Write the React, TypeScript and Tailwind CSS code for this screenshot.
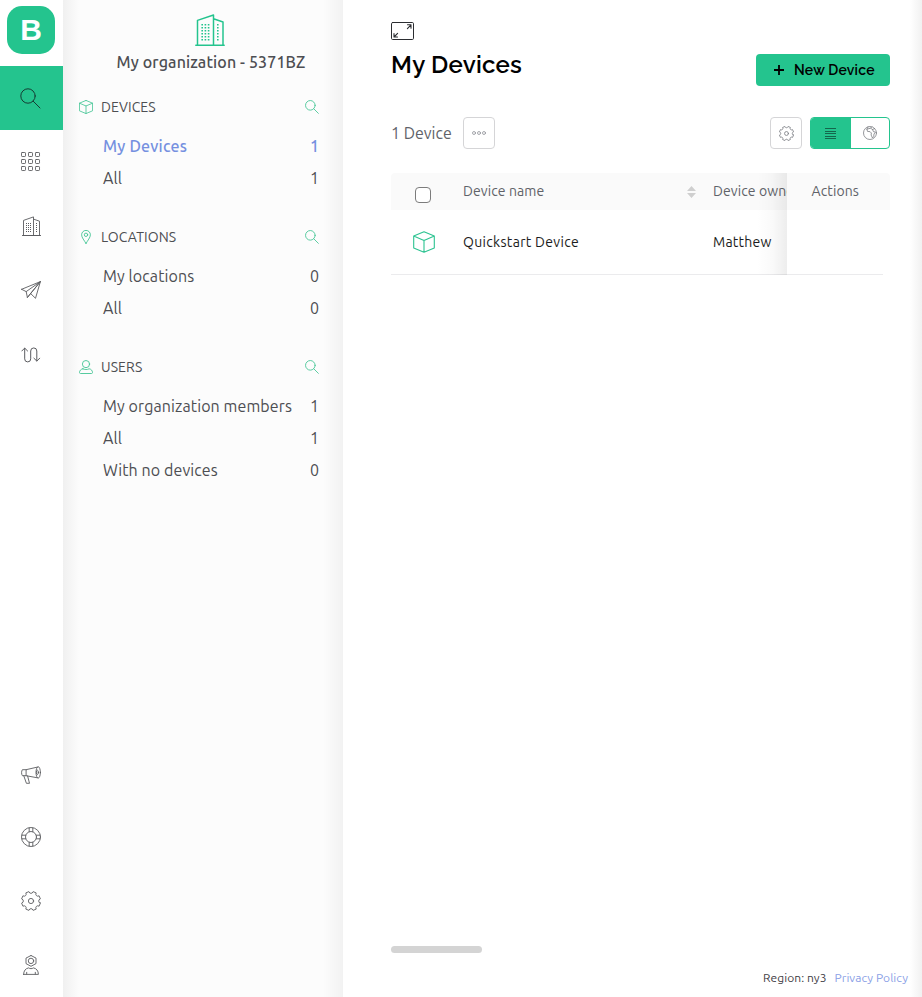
import React from "react";

type IconProps = { className?: string; children?: React.ReactNode };
type Box = IconProps & { box: string; sw?: number };

const Svg = ({ className = "", box, sw = 1, children }: Box) => (
  <svg className={`shrink-0 ${className}`} viewBox={box} fill="none" stroke="currentColor" strokeWidth={sw} strokeLinecap="round" strokeLinejoin="round">
    {children}
  </svg>
);

const SearchIcon = ({ className, sw = 1 }: IconProps & { sw?: number }) => (
  <Svg className={className} box="0 0 21 21" sw={sw}>
    <circle cx="8" cy="8" r="7.2" />
    <path d="M13.2 13.2 20 20" />
  </Svg>
);

const GridIcon = ({ className }: IconProps) => (
  <Svg className={className} box="0 0 20 20" sw={0.9}>
    {[0.5, 7.5, 14.5].map((y) => [0.5, 7.5, 14.5].map((x) => <rect key={`${x}-${y}`} x={x} y={y} width="4" height="4" rx="0.7" />))}
  </Svg>
);

const BuildingIcon = ({ className }: IconProps) => (
  <Svg className={className} box="0 0 30 33" sw={1.5}>
    <path d="M.8 31.2h28.4M2.5 31V6.4L18.5 1v30M18.5 4.7 28 8v23" />
    <path strokeWidth="1.6" strokeLinecap="butt" strokeDasharray="1.6 1.4" d="M7.2 10v18M10.4 10v18M13.6 10v18M22.8 10v18" />
  </Svg>
);

const SmallBuildingIcon = ({ className }: IconProps) => (
  <Svg className={className} box="0 0 19 21" sw={0.9}>
    <path strokeWidth="1.1" d="M.5 19.5h18" />
    <path d="M1.5 19.5V4.4L11.5.9v18.6M11.5 3.1l6 2.1v14.3" />
    <path strokeWidth="1" strokeLinecap="butt" strokeDasharray="1 1" d="M4.500 7v10M6.500 7v10M8.500 7v10M14.500 7v10" />
  </Svg>
);

const PlaneIcon = ({ className }: IconProps) => (
  <Svg className={className} box="0 0 20 18" sw={0.9}>
    <path d="M.6 8.3 19.4.6 14.5 17.3 9.6 12.5 19.4.6 5.2 10.6.6 8.3ZM5.2 10.6l1.2 5.9L19.4.6M6.4 16.5l3.2-4" />
  </Svg>
);

const RouteIcon = ({ className }: IconProps) => (
  <Svg className={className} box="0 0 20 16" sw={1}>
    <path d="M.8 4 3.7 1.1 6.6 4M3.7 1.3v10.6a3 3 0 0 0 6 0V4a3 3 0 0 1 6.1 0v9.9M12.9 11.2l2.9 2.9 2.9-2.9" />
  </Svg>
);

const MegaphoneIcon = ({ className }: IconProps) => (
  <Svg className={className} box="0 0 20 18" sw={0.9}>
    <path d="M5.1 3.7H1.4c-1.1 1.5-1.1 4.5 0 6h3.7l11.3 2.1M16.4 1.1 5.1 3.7v6M2.8 9.8l2.6 7.5h3.1L6.6 10" />
    <ellipse cx="17.2" cy="6.4" rx="2.2" ry="5.7" />
    <ellipse cx="16.4" cy="6.4" rx="1" ry="2.2" />
  </Svg>
);

const LifebuoyIcon = ({ className }: IconProps) => (
  <Svg className={className} box="0 0 20 20" sw={0.9}>
    <circle cx="10" cy="10" r="9.5" />
    <circle cx="10" cy="10" r="5.5" />
    <path d="M8.2.8v4M11.8.8v4M8.2 15.2v4M11.8 15.2v4M.8 8.2h4M.8 11.8h4M15.2 8.2h4M15.2 11.8h4" />
  </Svg>
);

const polar = (r: number, deg: number) => {
  const a = (deg * Math.PI) / 180;
  return `${(10 + r * Math.cos(a)).toFixed(2)} ${(10 + r * Math.sin(a)).toFixed(2)}`;
};
// Eight flat-topped teeth with a rounded notch between each pair.
const gearPath = Array.from({ length: 8 }, (_, i) => {
  const c = 22.5 + i * 45;
  return `${i ? "L" : "M"}${polar(9.6, c - 10)}L${polar(9.6, c + 10)}L${polar(8.1, c + 14)}Q${polar(7.3, c + 22.5)} ${polar(8.1, c + 31)}`;
}).join("") + "Z";

const GearIcon = ({ className, sw = 0.9 }: IconProps & { sw?: number }) => (
  <Svg className={className} box="0 0 20 20" sw={sw}>
    <circle cx="10" cy="10" r="2.6" />
    <path d={gearPath} />
  </Svg>
);

const ProfileIcon = ({ className }: IconProps) => (
  <Svg className={className} box="0 0 16 20" sw={0.9}>
    <path d="M8 .5 13 3.1v5.5L8 11.3 3 8.6V3.1L8 .5ZM.6 19.4c0-3.6 2-6 5-6.5 1.5 1 3.3 1 4.8 0 3 .5 5 2.9 5 6.5H.6ZM3.7 19v-1.7M12.3 19v-1.7" />
    <circle cx="8" cy="5.9" r="2.7" />
  </Svg>
);

const CubeIcon = ({ className, sw = 1.1 }: IconProps & { sw?: number }) => (
  <Svg className={className} box="0 0 22 22" sw={sw}>
    <path d="M11 .7 21.3 5v12L11 21.3.7 17V5L11 .7ZM.7 5 11 9.4 21.3 5M11 9.4v11.9" />
  </Svg>
);

const PinIcon = ({ className }: IconProps) => (
  <Svg className={className} box="0 0 10 14" sw={0.9}>
    <path d="M5 13.5C3.3 10.4.6 7.5.6 4.8a4.4 4.4 0 0 1 8.8 0c0 2.7-2.7 5.6-4.4 8.7Z" />
    <circle cx="5" cy="4.8" r="1.7" />
  </Svg>
);

const UserIcon = ({ className }: IconProps) => (
  <Svg className={className} box="0 0 14 14" sw={0.9}>
    <circle cx="7" cy="4.1" r="3.6" />
    <path d="M3.9 8.8C1.8 9 .5 10.8.5 12.5c0 .6.4 1 1 1h11c.6 0 1-.4 1-1 0-1.7-1.3-3.5-3.4-3.7-1.9 1-4.3 1-6.2 0Z" />
  </Svg>
);

const ExpandIcon = ({ className }: IconProps) => (
  <Svg className={className} box="0 0 23 18" sw={1}>
    <rect x=".5" y=".5" width="22" height="17" rx="1.2" />
    <path strokeWidth="1.1" d="M16.5 2.8H20v3.5M20 2.8l-3.6 3.8M6.500 15H3v-3.500M3 15l3.600-3.600" />
  </Svg>
);

const GlobeIcon = ({ className }: IconProps) => (
  <Svg className={className} box="0 0 14 14" sw={0.8}>
    <circle cx="7" cy="7" r="6.5" />
    <path d="M5 .9 3.9 3.2l.6 2.2 2.6.3 1.3 1.3-.3 2 1.4 3 1.2-1.5.3-2.5 1.5-1.9-2.1-.5-.8-2 2.1-1.2M3.9 3.2l3.6-1 2.2 1.4M7.5 2.2 8.8.9" />
  </Svg>
);

const topNav = [
  { icon: <GridIcon className="size-5" /> },
  { icon: <SmallBuildingIcon className="h-[21px] w-[19px]" /> },
  { icon: <PlaneIcon className="h-[18px] w-5" /> },
  { icon: <RouteIcon className="mt-px h-4 w-5" /> },
];
const bottomNav = [
  { icon: <MegaphoneIcon className="mt-[3px] h-[18px] w-5" /> },
  { icon: <LifebuoyIcon className="size-5" /> },
  { icon: <GearIcon className="size-5" /> },
  { icon: <ProfileIcon className="h-5 w-4" /> },
];

type Item = { label: string; count: number; active?: boolean };
const sections: { title: string; icon: React.ReactNode; items: Item[] }[] = [
  {
    title: "DEVICES",
    icon: <CubeIcon className="size-3.5" sw={1.3} />,
    items: [
      { label: "My Devices", count: 1, active: true },
      { label: "All", count: 1 },
    ],
  },
  {
    title: "LOCATIONS",
    icon: <PinIcon className="h-3.5 w-2.5" />,
    items: [
      { label: "My locations", count: 0 },
      { label: "All", count: 0 },
    ],
  },
  {
    title: "USERS",
    icon: <UserIcon className="size-3.5" />,
    items: [
      { label: "My organization members", count: 1 },
      { label: "All", count: 1 },
      { label: "With no devices", count: 0 },
    ],
  },
];

const Rail = () => (
  <nav className="flex w-[63px] shrink-0 flex-col bg-white text-[#5b5c60]">
    <div className="flex h-[66px] justify-center pt-1.5 pr-px">
      <div className="flex size-12 items-center justify-center rounded-[15px] bg-[#24c48e] font-['Liberation_Sans',sans-serif] text-[30px] leading-none font-bold text-white">
        B
      </div>
    </div>
    <a className="flex h-16 items-center justify-center bg-[#24c48e] pr-0.5 text-[#153c33]">
      <SearchIcon className="size-[21px]" />
    </a>
    {topNav.map((n, i) => (
      <a key={i} className="flex h-16 items-center justify-center pr-px">{n.icon}</a>
    ))}
    <div className="mt-auto">
      {bottomNav.map((n, i) => (
        <a key={i} className="flex h-16 items-center justify-center pr-px">{n.icon}</a>
      ))}
    </div>
  </nav>
);

const Sidebar = () => (
  <aside className="relative w-[280px] shrink-0 bg-[#fcfcfc] text-[#4d4e52]">
    <div className="pointer-events-none absolute inset-y-0 left-0 w-4 bg-gradient-to-r from-[#f0f0f0] to-transparent" />
    <div className="pointer-events-none absolute inset-y-0 right-0 w-5 bg-gradient-to-l from-[#f2f2f2] to-transparent" />
    <div className="relative flex h-[91px] flex-col items-center pt-3.5 pl-4">
      <BuildingIcon className="mr-0.5 h-[33px] w-[30px] text-[#24c48e]" />
      <h2 className="mt-[3px] text-[16px] leading-6 font-medium tracking-[0.12px] whitespace-nowrap">My organization - 5371BZ</h2>
    </div>
    <div className="relative flex flex-col gap-[26px] pr-6 pl-4">
      {sections.map((s) => (
        <section key={s.title}>
          <div className="mb-2 flex h-8 items-center">
            <span className="mr-2 flex w-3.5 justify-center text-[#43c594]">{s.icon}</span>
            <span className="text-[14px] tracking-[0.1px]">{s.title}</span>
            <SearchIcon className="ml-auto size-3.5 text-[#43c594]" sw={1.3} />
          </div>
          {s.items.map((it) => (
            <div key={it.label} className={`flex h-8 items-center justify-between pb-0.5 pl-6 text-[16px] ${it.active ? "text-[#7590e0]" : ""}`}>
              <span className={`whitespace-nowrap ${it.active ? "font-medium tracking-[0.2px]" : "tracking-[0.1px]"}`}>{it.label}</span>
              <span className={it.active ? "font-medium" : ""}>{it.count}</span>
            </div>
          ))}
        </section>
      ))}
    </div>
  </aside>
);

const Main = () => (
  <main className="relative flex min-w-0 flex-1 flex-col bg-white">
    <div className="pointer-events-none absolute inset-y-0 right-0 w-3 bg-gradient-to-l from-[#f1f1f1] to-transparent" />
    <div className="flex h-[117px] justify-between pr-8 pl-12">
      <div className="pt-[22px]">
        <ExpandIcon className="h-[18px] w-[23px] text-[#2b2d31]" />
        <h1 className="mt-2 font-['Raleway','Lato',sans-serif] text-[24px] leading-[34px] font-semibold tracking-[0.25px] whitespace-nowrap text-black">My Devices</h1>
      </div>
      <button className="mt-[54px] flex h-8 w-[134px] items-center rounded bg-[#24c48e] pl-[18px] font-['Raleway','Inter',sans-serif] text-[14px] font-semibold tracking-[0.2px] whitespace-nowrap text-black">
        <svg className="mr-2.5 size-2.5" viewBox="0 0 10 10" stroke="currentColor" strokeWidth="1.800"><path d="M5 0v10M0 5h10" /></svg>
        <span>New Device</span>
      </button>
    </div>
    <div className="flex h-8 items-center pr-8 pl-12">
      <span className="w-[72px] text-[16px] whitespace-nowrap text-[#606268]">1 Device</span>
      <button className="flex size-8 items-center justify-center rounded border border-[#d5d5d7] pr-px text-[#92949a]">
        <Svg className="h-1 w-3.5" box="0 0 14 4" sw={0.8}>
          <circle cx="2" cy="2" r="1.5" /><circle cx="7" cy="2" r="1.5" /><circle cx="12" cy="2" r="1.5" />
        </Svg>
      </button>
      <button className="mr-2 ml-auto flex size-8 items-center justify-center rounded border border-[#d5d5d7] text-[#7b7d83]">
        <GearIcon className="size-[15px]" sw={1.1} />
      </button>
      <div className="flex h-8 w-20 overflow-hidden rounded border border-[#24c48e]">
        <div className="flex w-10 items-center justify-center bg-[#24c48e] pr-px text-[#14664c]">
          <svg className="h-[11px] w-[11px]" viewBox="0 0 11 11" fill="currentColor"><path d="M0 0h11v1H0zM0 3h11v1H0zM0 5h11v1H0zM0 8h11v1H0zM0 10h11v1H0z" /></svg>
        </div>
        <div className="flex flex-1 items-center justify-center text-[#7b7d83]">
          <GlobeIcon className="size-3.5" />
        </div>
      </div>
    </div>
    <div className="mt-6 mr-8 ml-12 flex">
      <div className="relative w-[396px] overflow-hidden">
        <div className="flex h-[37px] rounded-tl bg-[#fafafa] text-[14px] text-[#606268]">
          <div className="flex w-[72px] shrink-0 justify-center pt-3.5 pr-2">
            <span className="size-4 rounded-[4px] border border-[#7c7c7c] bg-white" />
          </div>
          <div className="flex w-[250px] shrink-0 justify-between pr-[17px] leading-9 whitespace-nowrap">
            <span className="tracking-[0.1px]">Device name</span>
            <svg className="mt-[13px] h-3 w-[9px]" viewBox="0 0 9 12" fill="#cfcfcf"><path d="M4.5 0 9 5H0zM4.5 12 0 7h9z" /></svg>
          </div>
          <span className="leading-9 tracking-[0.1px] whitespace-nowrap">Device owner</span>
        </div>
        <div className="flex h-[65px] items-center border-b border-[#ebebed] text-[14px] text-[#1b1c20]">
          <div className="flex w-[72px] justify-center pr-[7px] text-[#2cc391]"><CubeIcon className="size-[22px]" /></div>
          <span className="w-[250px] tracking-[0.32px]">Quickstart Device</span>
          <span className="tracking-[0.25px]">Matthew</span>
        </div>
        <div className="pointer-events-none absolute inset-y-0 right-0 w-[30px] bg-gradient-to-l from-black/[0.07] via-black/[0.02] to-transparent" />
      </div>
      <div className="flex-1">
        <div className="h-[37px] rounded-tr bg-[#fafafa] pl-[24.5px] text-[14px] leading-9 tracking-[0.1px] text-[#606268]">Actions</div>
        <div className="mr-[7px] h-[65px] border-b border-[#ebebed]" />
      </div>
    </div>
    <div className="mt-auto ml-12 h-[7px] w-[91px] rounded-full bg-[#d4d4d4]" />
    <footer className="mt-4 flex h-7 justify-end gap-2 pr-3.5 text-[12px] leading-[18px] tracking-[0.07px] whitespace-nowrap">
      <span className="text-[#3f4045]">Region: ny3</span>
      <a className="text-[#8aa0e6]">Privacy Policy</a>
    </footer>
  </main>
);

export default function App() {
  return (
    <div className="flex h-[997px] w-[922px] overflow-hidden bg-white font-['Ubuntu','Noto_Sans',sans-serif]">
      <Rail />
      <Sidebar />
      <Main />
    </div>
  );
}
